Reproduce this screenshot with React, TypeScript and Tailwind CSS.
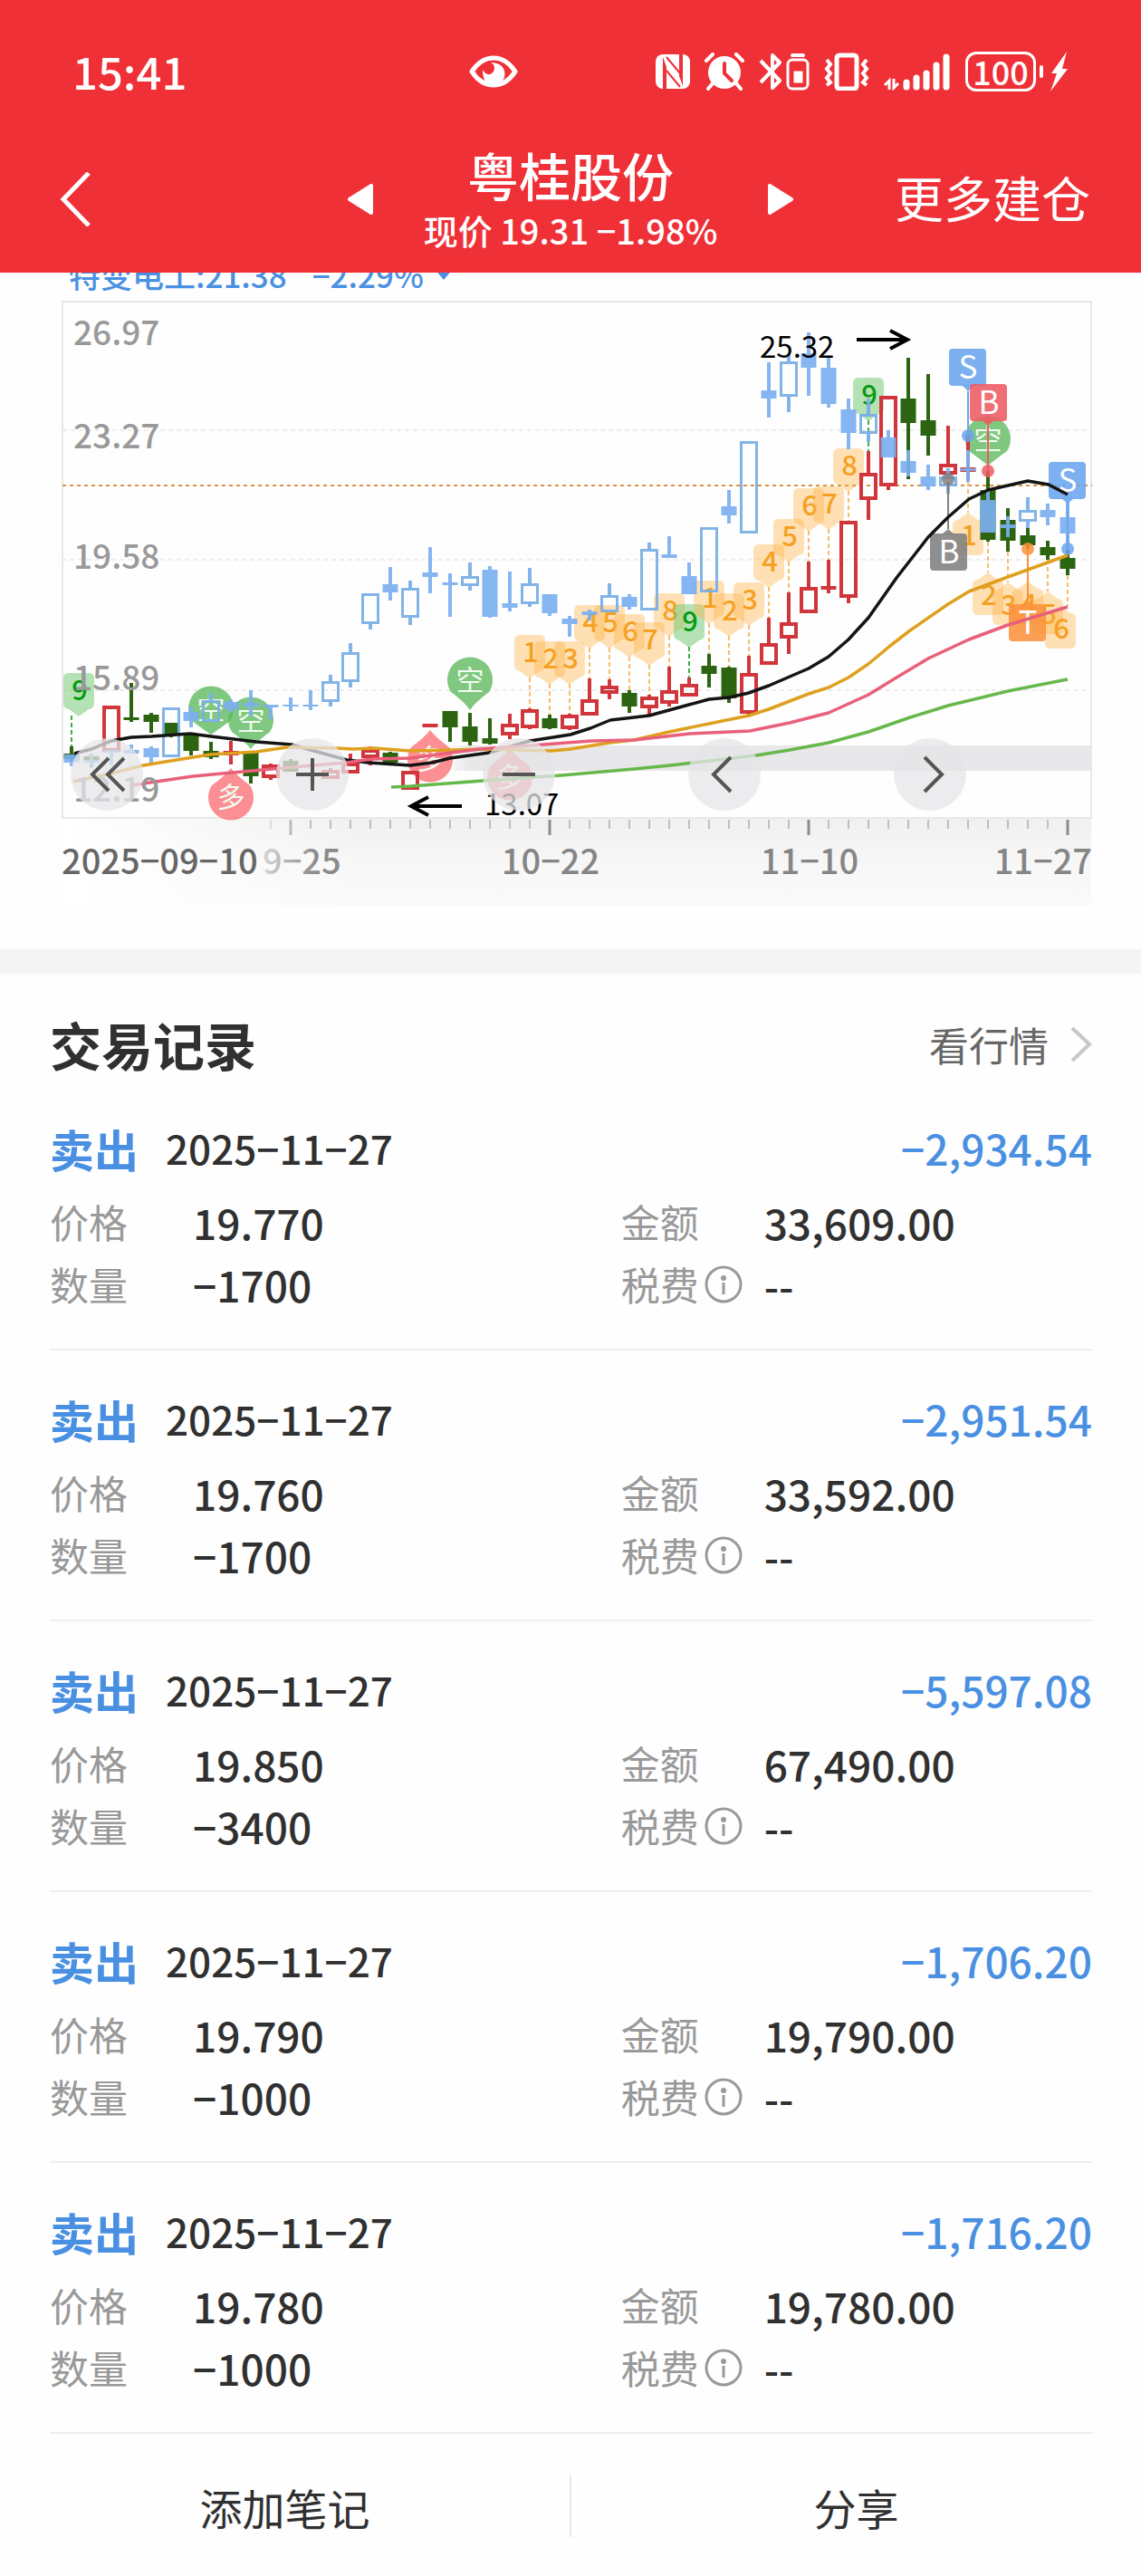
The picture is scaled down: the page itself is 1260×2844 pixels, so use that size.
import type { ReactNode } from "react";

type Kind = "up" | "down" | "hollow" | "solid";
// index, high, body top, body bottom, low, kind
type Candle = [number, number, number, number, number, Kind];

const RED = "#d0363b";
const GREEN = "#2c6412";
const BLUE = "#7bb0f0";
const COLORS: Record<Kind, string> = { up: RED, down: GREEN, hollow: "#78aee6", solid: BLUE };

const xAt = (i: number) => 79 + i * 22;

const mainCandles: Candle[] = [
  [0, 824, 832, 838, 840, "down"],
  [1, 832, 835, 839, 847, "down"],
  [2, 779, 779, 830, 830, "up"],
  [3, 754, 792, 795, 797, "down"],
  [4, 787, 789, 797, 809, "down"],
  [5, 798, 798, 812, 814, "down"],
  [6, 812, 812, 829, 834, "down"],
  [7, 819, 829, 836, 838, "down"],
  [8, 818, 829, 834, 844, "up"],
  [9, 831, 831, 857, 865, "down"],
  [10, 843, 844, 859, 861, "up"],
  [11, 838, 840, 852, 852, "down"],
  [13, 848, 850, 860, 860, "up"],
  [14, 832, 842, 854, 854, "up"],
  [15, 824, 827, 837, 845, "up"],
  [16, 830, 831, 842, 842, "down"],
  [17, 851, 851, 872, 872, "up"],
  [18, 799, 799, 803, 803, "up"],
  [19, 785, 785, 803, 819, "down"],
  [20, 787, 802, 819, 823, "down"],
  [21, 793, 815, 821, 822, "down"],
  [22, 788, 799, 812, 816, "up"],
  [23, 782, 783, 804, 805, "up"],
  [24, 789, 793, 804, 805, "down"],
  [25, 788, 789, 805, 806, "up"],
  [26, 749, 772, 790, 790, "up"],
  [27, 750, 757, 766, 772, "up"],
  [28, 762, 765, 780, 787, "down"],
  [29, 767, 769, 782, 791, "up"],
  [30, 736, 762, 777, 780, "up"],
  [31, 748, 755, 769, 769, "up"],
  [32, 722, 735, 744, 759, "down"],
  [33, 736, 737, 771, 776, "down"],
  [34, 724, 743, 788, 789, "up"],
  [35, 682, 710, 734, 734, "up"],
  [36, 654, 687, 705, 722, "up"],
  [37, 620, 648, 677, 677, "up"],
  [38, 618, 647, 651, 655, "up"],
  [39, 575, 575, 660, 666, "up"],
  [40, 498, 522, 552, 574, "up"],
  [41, 437, 437, 537, 541, "up"],
  [42, 395, 440, 467, 529, "down"],
  [43, 413, 464, 481, 503, "down"],
  [44, 470, 512, 524, 524, "up"],
  [45, 480, 516, 521, 532, "up"],
  [46, 520, 541, 596, 598, "down"],
  [47, 561, 574, 597, 609, "down"],
  [48, 583, 591, 602, 606, "down"],
  [49, 597, 604, 613, 618, "down"],
  [50, 607, 616, 628, 635, "down"],
];

const compareCandles: Candle[] = [
  [0, 833, 833, 842, 846, "solid"],
  [1, 832, 839, 842, 846, "solid"],
  [2, 828, 828, 831, 845, "solid"],
  [3, 822, 828, 832, 832, "solid"],
  [4, 824, 826, 836, 844, "solid"],
  [5, 781, 781, 836, 836, "hollow"],
  [6, 780, 786, 796, 803, "solid"],
  [7, 765, 773, 797, 797, "hollow"],
  [8, 772, 775, 783, 787, "solid"],
  [9, 762, 776, 780, 790, "solid"],
  [10, 778, 778, 781, 794, "solid"],
  [11, 770, 778, 780, 785, "solid"],
  [12, 762, 778, 780, 784, "solid"],
  [13, 745, 752, 775, 780, "hollow"],
  [14, 710, 720, 753, 759, "hollow"],
  [15, 655, 655, 689, 695, "hollow"],
  [16, 626, 645, 654, 663, "solid"],
  [17, 641, 649, 682, 690, "hollow"],
  [18, 604, 632, 637, 655, "solid"],
  [19, 633, 643, 646, 681, "solid"],
  [20, 621, 636, 647, 652, "hollow"],
  [21, 625, 629, 681, 682, "solid"],
  [22, 631, 666, 671, 675, "solid"],
  [23, 627, 644, 667, 670, "hollow"],
  [24, 656, 656, 677, 680, "solid"],
  [25, 680, 683, 689, 703, "solid"],
  [26, 673, 675, 679, 685, "solid"],
  [27, 644, 657, 676, 676, "hollow"],
  [28, 656, 659, 670, 673, "solid"],
  [29, 599, 606, 674, 674, "hollow"],
  [30, 592, 612, 616, 616, "solid"],
  [31, 621, 636, 656, 656, "solid"],
  [32, 582, 582, 654, 654, "hollow"],
  [33, 541, 559, 569, 578, "solid"],
  [34, 487, 487, 589, 589, "hollow"],
  [35, 400, 431, 440, 461, "solid"],
  [36, 392, 399, 438, 455, "hollow"],
  [37, 367, 390, 406, 437, "solid"],
  [38, 394, 406, 446, 450, "solid"],
  [39, 440, 452, 478, 496, "solid"],
  [40, 440, 457, 479, 488, "hollow"],
  [41, 475, 483, 505, 505, "solid"],
  [42, 497, 509, 522, 526, "solid"],
  [43, 513, 526, 537, 541, "solid"],
  [44, 517, 526, 537, 545, "hollow"],
  [45, 497, 517, 520, 532, "solid"],
  [46, 541, 552, 588, 588, "solid"],
  [47, 570, 579, 583, 593, "solid"],
  [48, 549, 563, 576, 583, "hollow"],
  [49, 556, 563, 571, 580, "solid"],
  [50, 553, 571, 589, 607, "solid"],
];

const averages = [
  { color: "#141414", points: "82,832 101,827 123,818 145,814 167,813 210,810 233,813 283,819 322,822 343,828 383,839 407,842 453,845 477,842 497,837 540,831 585,818 630,811 652,804 674,795 700,792 717,790 739,784 783,772 805,770 827,765 849,757 893,738 915,725 937,706 959,682 990,638 1025,593 1047,571 1070,551 1091,541 1135,531 1158,535 1179,546" },
  { color: "#dfa01f", points: "81,863 127,853 158,845 232,833 283,830 317,825 370,826 390,827 413,826 453,829 540,827 608,829 630,827 673,820 700,817 739,808 783,799 827,790 849,783 893,766 915,759 937,748 959,733 983,713 1005,696 1047,667 1070,653 1113,637 1179,613" },
  { color: "#e8607a", points: "145,867 213,857 322,847 383,842 410,838 453,837 530,827 587,823 653,818 700,817 762,810 828,807 872,798 915,787 959,767 990,748 1025,727 1070,706 1113,690 1179,670" },
  { color: "#67b84b", points: "432,869 453,868 533,862 620,856 700,849 740,845 835,834 872,828 915,820 959,808 1005,792 1047,779 1113,763 1179,750" },
];

// index, label, box top, end of the dashed leader
const flagsAbove: [number, string, number, number][] = [
  [0, "9", 743, 824],
  [23, "1", 701, 782],
  [24, "2", 708, 789],
  [25, "3", 708, 788],
  [26, "4", 668, 749],
  [27, "5", 668, 750],
  [28, "6", 678, 762],
  [29, "7", 687, 767],
  [30, "8", 655, 736],
  [31, "9", 667, 748],
  [32, "1", 641, 722],
  [33, "2", 655, 736],
  [34, "3", 643, 724],
  [35, "4", 601, 682],
  [36, "5", 573, 654],
  [37, "6", 539, 620],
  [38, "7", 537, 618],
  [39, "8", 495, 575],
  [40, "9", 417, 498],
];

// index, label, tip, start of the dashed leader
const flagsBelow: [number, string, number, number][] = [
  [45, "1", 566, 532],
  [46, "2", 632, 598],
  [47, "3", 643, 609],
  [48, "4", 642, 606],
  [49, "5", 653, 618],
  [50, "6", 669, 635],
];

// x, circle centre, tip, label
const pins: [number, number, number, string][] = [
  [233, 783, 811, "空"],
  [277, 795, 827, "空"],
  [519, 751, 784, "空"],
  [1091, 485, 514, "空"],
  [255, 880, 848, "多"],
  [475, 838, 806, "多"],
  [563, 858, 826, "多"],
];

const trades = [
  { date: "2025-11-27", profit: "-2,934.54", price: "19.770", qty: "-1700", amount: "33,609.00" },
  { date: "2025-11-27", profit: "-2,951.54", price: "19.760", qty: "-1700", amount: "33,592.00" },
  { date: "2025-11-27", profit: "-5,597.08", price: "19.850", qty: "-3400", amount: "67,490.00" },
  { date: "2025-11-27", profit: "-1,706.20", price: "19.790", qty: "-1000", amount: "19,790.00" },
  { date: "2025-11-27", profit: "-1,716.20", price: "19.780", qty: "-1000", amount: "19,780.00" },
];

const fig = (text: string) => text.replace(/-/g, "−");

function CandleShape({ candle }: { candle: Candle }) {
  const [i, high, top, bottom, low, kind] = candle;
  const x = xAt(i);
  const color = COLORS[kind];
  const open = (kind === "up" || kind === "hollow") && bottom - top > 8;
  const w = kind === "up" ? 4 : 3;
  return (
    <g>
      {high < top && <line x1={x} x2={x} y1={high} y2={top} stroke={color} strokeWidth="4" />}
      {low > bottom && <line x1={x} x2={x} y1={bottom} y2={low} stroke={color} strokeWidth="4" />}
      {open ? (
        <rect x={x - 10 + w / 2} y={top + w / 2} width={20 - w} height={bottom - top - w} fill="none" stroke={color} strokeWidth={w} />
      ) : (
        <rect x={x - 8.5} y={top} width="17" height={bottom - top} fill={color} />
      )}
    </g>
  );
}

function Flag({ x, y, label, below }: { x: number; y: number; label: string; below?: boolean }) {
  const green = label === "9";
  const d = below
    ? `M${x} ${y} l11 8 q6 0 6 6 v27 q0 6 -6 6 h-22 q-6 0 -6 -6 v-27 q0 -6 6 -6z`
    : `M${x - 11} ${y} h22 q6 0 6 6 v28 q0 5 -6 6 l-11 8 l-11 -8 q-6 -1 -6 -6 v-28 q0 -6 6 -6z`;
  return (
    <g>
      <path d={d} fill={green ? "#69c56b" : "#ffb347"} fillOpacity={green ? 0.5 : 0.4} />
      <text x={x + 1} y={below ? y + 36 : y + 30} textAnchor="middle" fontSize="31" fontWeight="500" fill={green ? "#079a10" : "#f5a021"}>
        {label}
      </text>
    </g>
  );
}

function Pin({ x, cy, tip, label }: { x: number; cy: number; tip: number; label: string }) {
  const color = label === "空" ? "#5cb85c" : "#fb6f76";
  const dir = tip > cy ? 1 : -1;
  return (
    <g>
      <path
        d={`M${x - 21} ${cy + dir * 13} A25 25 0 1 ${dir > 0 ? 1 : 0} ${x + 21} ${cy + dir * 13} Q${x + 6} ${cy + dir * 24} ${x} ${tip} Q${x - 6} ${cy + dir * 24} ${x - 21} ${cy + dir * 13}z`}
        fill={color}
        fillOpacity="0.78"
      />
      <text x={x} y={cy + 11} textAnchor="middle" fontSize="31" fill="#f2fbf0">
        {label}
      </text>
    </g>
  );
}

function Mark({ x, y, left, top, tip, dot, label, color }: { x: number; y: number; left: number; top: number; tip: number; dot: number; label: string; color: string }) {
  const base = tip > top ? top + 40 : top + 1;
  return (
    <g>
      <line x1={x} x2={x} y1={tip} y2={y} stroke={color} strokeWidth="2" />
      <circle cx={x} cy={dot} r="7" fill={color} fillOpacity="0.85" />
      <rect x={left} y={top} width="41" height="41" rx="4" fill={color} fillOpacity="0.88" />
      <path d={`M${x - 7} ${base} L${x} ${tip} L${x + 7} ${base}z`} fill={color} fillOpacity="0.88" />
      <text x={left + 21} y={top + 33} textAnchor="middle" fontSize="35" fill="#fff">
        {label}
      </text>
    </g>
  );
}

function KLineChart() {
  return (
    <svg viewBox="0 325 1260 723" className="block h-auto w-full" role="img" aria-label="K线图">
      <defs>
        <linearGradient id="axis" x1="0" x2="0" y1="0" y2="1">
          <stop offset="0" stopColor="#f0f0ef" />
          <stop offset="0.5" stopColor="#f7f7f7" />
          <stop offset="1" stopColor="#fafafa" />
        </linearGradient>
        <linearGradient id="axisFade" x1="0" x2="1" y1="0" y2="0">
          <stop offset="0" stopColor="#fff" />
          <stop offset="0.3" stopColor="#fff" stopOpacity="0" />
        </linearGradient>
        <linearGradient id="band" x1="0" x2="1" y1="0" y2="0">
          <stop offset="0" stopColor="#e8e8ea" stopOpacity="0" />
          <stop offset="0.04" stopColor="#e8e8ea" />
        </linearGradient>
        <linearGradient id="dateFade" gradientUnits="userSpaceOnUse" x1="285" x2="350" y1="0" y2="0">
          <stop offset="0" stopColor="#dcdcdc" />
          <stop offset="1" stopColor="#8a8a8a" />
        </linearGradient>
      </defs>

      <rect x="69" y="904" width="1136" height="96" fill="url(#axis)" />
      <rect x="69" y="904" width="1136" height="96" fill="url(#axisFade)" />
      <rect x="490" y="823" width="715" height="28" fill="url(#band)" />
      <rect x="69" y="333" width="1136" height="570" fill="none" stroke="#e8e8e8" strokeWidth="2" />
      {[475, 618, 762].map((y) => (
        <line key={y} x1="69" x2="1201" y1={y} y2={y} stroke="#dcdcdc" strokeDasharray="5 4" />
      ))}
      <line x1="69" x2="1206" y1="536" y2="536" stroke="#d9923f" strokeWidth="2" strokeDasharray="4 4" />

      {flagsAbove.map(([i, label, top, end]) => (
        <g key={i}>
          <line x1={xAt(i)} x2={xAt(i)} y1={top + 47} y2={end} stroke={label === "9" ? "#3fae46" : "#f6bd6a"} strokeWidth="2" strokeDasharray="5 3" />
          <Flag x={i === 0 ? 87 : xAt(i)} y={top} label={label} />
        </g>
      ))}
      {flagsBelow.map(([i, label, tip, start]) => (
        <g key={i}>
          <line x1={xAt(i)} x2={xAt(i)} y1={start} y2={tip} stroke="#f6bd6a" strokeWidth="2" strokeDasharray="5 3" />
          <Flag x={i === 50 ? 1171 : xAt(i)} y={tip} label={label} below />
        </g>
      ))}
      {pins.map(([x, cy, tip, label]) => (
        <Pin key={x} x={x} cy={cy} tip={tip} label={label} />
      ))}

      <g fill="none" stroke="#000" strokeWidth="4">
        <path d="M946 375 H1002 M983 365 L1002 375 L983 385" />
        <path d="M510 890 H454 M473 880 L454 890 L473 900" />
      </g>

      {mainCandles.map((c) => (
        <CandleShape key={c[0]} candle={c} />
      ))}
      <g opacity="0.92">
        {compareCandles.map((c) => (
          <CandleShape key={c[0]} candle={c} />
        ))}
      </g>
      <g fontSize="33" fill="#000">
        <text x="839" y="395">25.32</text>
        <text x="535" y="900">13.07</text>
      </g>

      <Mark x={1069} y={481} left={1048} top={385} tip={432} dot={481} label="S" color="#6aa5ee" />
      <Mark x={1091} y={520} left={1071} top={424} tip={470} dot={520} label="B" color="#ee5a63" />
      <Mark x={1179} y={600} left={1158} top={510} tip={556} dot={606} label="S" color="#6aa5ee" />
      <Mark x={1047} y={532} left={1027} top={589} tip={584} dot={529} label="B" color="#808080" />
      <Mark x={1135} y={610} left={1114} top={667} tip={662} dot={606} label="T" color="#fb923c" />

      {averages.map((line) => (
        <polyline key={line.color} points={line.points} fill="none" stroke={line.color} strokeWidth="3.5" strokeLinejoin="round" />
      ))}

      <g fontSize="37" fontWeight="500" fill="#999">
        <text x="81" y="381">26.97</text>
        <text x="81" y="495">23.27</text>
        <text x="81" y="628">19.58</text>
        <text x="81" y="762">15.89</text>
        <text x="81" y="885">12.19</text>
      </g>

      {Array.from({ length: 41 }, (_, n) => n + 10).map((i) => {
        const major = i === 11 || i === 24 || i === 37 || i === 50;
        return (
          <line
            key={i}
            x1={xAt(i)}
            x2={xAt(i)}
            y1="905"
            y2={major ? 922 : 915}
            stroke={i < 12 ? "#bdbdbd" : "#8c8c8c"}
            strokeWidth={major ? 3 : 1}
          />
        );
      })}
      <g fontSize="38" fontWeight="500" fill="#858585">
        <text x="68" y="965" fill="#666">{fig("2025-09-10")}</text>
        <text x="290" y="965" fill="url(#dateFade)">{fig("9-25")}</text>
        <text x="608" y="965" textAnchor="middle">{fig("10-22")}</text>
        <text x="894" y="965" textAnchor="middle">{fig("11-10")}</text>
        <text x="1206" y="965" textAnchor="end">{fig("11-27")}</text>
      </g>
    </svg>
  );
}

function RoundButton({ label, children }: { label: string; children: ReactNode }) {
  return (
    <button type="button" aria-label={label} className="size-20 rounded-full bg-[#e6e5e8]/75">
      <svg viewBox="0 0 80 80" className="size-20" fill="none" stroke="#555" strokeWidth="4">
        {children}
      </svg>
    </button>
  );
}

function StatusIcons() {
  return (
    <div className="flex items-center gap-4 text-white">
      <svg viewBox="0 0 38 38" className="h-[38px] w-[38px]" aria-hidden="true">
        <rect width="38" height="38" rx="8" fill="currentColor" />
        <path d="M8 38 V3 L12 14 V38z M30 0 V35 L26 24 V0z" fill="#f03037" />
        <path d="M12 3 L27 21 M12 18 L27 36" stroke="#f03037" strokeWidth="2" fill="none" />
      </svg>
      <svg viewBox="0 0 44 42" className="h-[42px] w-[44px]" aria-hidden="true">
        <circle cx="22" cy="22" r="18" fill="currentColor" />
        <path d="M2 9 L9 2 M42 9 L35 2 M9 34 L4 40 M35 34 L40 40" stroke="currentColor" strokeWidth="4" strokeLinecap="round" />
        <path d="M22 12 V23 L30 31" stroke="#f03037" strokeWidth="4" strokeLinecap="round" fill="none" />
      </svg>
      <svg viewBox="0 0 56 42" className="h-[42px] w-[56px]" fill="none" stroke="currentColor" aria-hidden="true">
        <path d="M2 9 L23 31 L15 39 V3 L23 11 L2 33" strokeWidth="4" strokeLinejoin="round" />
        <rect x="32" y="8" width="22" height="32" rx="5" strokeWidth="3" />
        <path d="M37 3 H49" strokeWidth="4" strokeLinecap="round" />
        <rect x="39" y="21" width="9" height="12" fill="currentColor" />
      </svg>
      <svg viewBox="0 0 50 42" className="h-[42px] w-[50px]" fill="none" stroke="currentColor" aria-hidden="true">
        <rect x="14" y="3" width="22" height="37" rx="3" strokeWidth="5" />
        <path d="M3 8 L7 13 L3 18 L7 23 L3 28 L7 33 L3 36 M47 8 L43 13 L47 18 L43 23 L47 28 L43 33 L47 36" strokeWidth="4" />
      </svg>
      <svg viewBox="0 0 74 42" className="h-[42px] w-[74px]" fill="none" stroke="currentColor" aria-hidden="true">
        <path d="M6 41 V31 L1 36 M11 29 V39 L16 34" strokeWidth="3" />
        <path d="M25 38 V33 M36 38 V28 M47 38 V23 M58 38 V14 M69 38 V5" strokeWidth="7" strokeLinecap="round" />
      </svg>
      <div className="flex items-center gap-1">
        <span className="flex h-11 w-[78px] items-center justify-center rounded-[12px] border-3 border-white pb-0.5 text-[36px] leading-none font-medium">100</span>
        <span className="h-3.5 w-1 rounded-full bg-white" />
        <svg viewBox="0 0 20 44" className="ml-1 h-11 w-5" fill="currentColor" aria-hidden="true">
          <path d="M18 0 L1 24 H7 L0 44 L19 19 H13z" />
        </svg>
      </div>
    </div>
  );
}

function Header() {
  return (
    <header className="bg-[#f03037] text-white">
      <div className="relative flex h-[158px] items-center justify-between px-20">
        <time className="pb-1 text-[49px] leading-none font-medium">15:41</time>
        <svg viewBox="0 0 54 36" className="absolute left-[518px] h-9 w-[54px]" aria-hidden="true">
          <path d="M3 18 Q13 3 27 3 Q41 3 51 18 Q41 33 27 33 Q13 33 3 18z" fill="none" stroke="#fff" strokeWidth="5" strokeLinejoin="round" />
          <path d="M24 8 C37 8 41 17 39 24 C37 30 33 34 27 34 C20 34 15 28 15 16 C19 23 24 22 27 18 C29 14 28 10 24 8z" fill="#fff" />
        </svg>
        <StatusIcons />
      </div>
      <div className="grid h-[143px] grid-cols-[1fr_auto_1fr] items-center px-14 pb-5">
        <button type="button" aria-label="返回" className="justify-self-start px-2.5">
          <svg viewBox="0 0 34 60" className="h-[60px] w-[34px]" fill="none" stroke="#fff" strokeWidth="5">
            <path d="M32 1 L4 30 L32 59" />
          </svg>
        </button>
        <div className="flex items-center gap-14">
          <button type="button" aria-label="上一只">
            <svg viewBox="0 0 28 34" className="h-[34px] w-7" fill="#fff" stroke="#fff" strokeWidth="4" strokeLinejoin="round">
              <path d="M26 2 V32 L2 17z" />
            </svg>
          </button>
          <div className="text-center font-medium">
            <h1 className="text-[57px] leading-[68px]">粤桂股份</h1>
            <p className="text-[38px] leading-[56px]">{fig("现价 19.31 -1.98%")}</p>
          </div>
          <button type="button" aria-label="下一只">
            <svg viewBox="0 0 28 34" className="h-[34px] w-7" fill="#fff" stroke="#fff" strokeWidth="4" strokeLinejoin="round">
              <path d="M2 2 V32 L26 17z" />
            </svg>
          </button>
        </div>
        <button type="button" className="justify-self-end pb-1 text-[54px] leading-none">更多建仓</button>
      </div>
    </header>
  );
}

function ChartSection() {
  return (
    <section className="overflow-hidden">
      <p className="-mt-5 flex items-center gap-7 pl-[76px] text-[35px] leading-[44px] font-medium text-[#4a90e2]">
        <span>特变电工:21.38</span>
        <span>{fig("-2.29%")}</span>
        <svg viewBox="0 0 20 12" className="-ml-4 h-3 w-5" fill="currentColor" aria-hidden="true">
          <path d="M0 0 H20 L10 12z" />
        </svg>
      </p>
      <div className="relative">
        <KLineChart />
        <div className="absolute top-[67.8%] right-[15.3%] left-[6.2%] flex justify-between">
          <RoundButton label="最早">
            <path d="M42 22 L24 40 L42 58 M59 22 L41 40 L59 58" />
          </RoundButton>
          <RoundButton label="放大">
            <path d="M22 40 H58 M40 22 V58" />
          </RoundButton>
          <RoundButton label="缩小">
            <path d="M22 40 H58" />
          </RoundButton>
          <RoundButton label="左移">
            <path d="M47 21 L28 40 L47 59" />
          </RoundButton>
          <RoundButton label="右移">
            <path d="M34 21 L53 40 L34 59" />
          </RoundButton>
        </div>
      </div>
    </section>
  );
}

function InfoIcon() {
  return (
    <svg viewBox="0 0 42 42" className="h-[42px] w-[42px]" fill="none" stroke="#999" strokeWidth="3" aria-hidden="true">
      <circle cx="21" cy="21" r="19" />
      <path d="M21 19 V32" />
      <circle cx="21" cy="14" r="3" fill="#999" stroke="none" />
    </svg>
  );
}

function Field({ label, value, info }: { label: string; value: string; info?: boolean }) {
  return (
    <div className="flex h-[69px] items-center">
      <dt className="flex w-[158px] items-center gap-1.5 text-[43px] text-[#999]">
        {label}
        {info && <InfoIcon />}
      </dt>
      <dd className="text-[46px] font-medium text-[#303030]">{value}</dd>
    </div>
  );
}

function TradeRow({ trade }: { trade: (typeof trades)[number] }) {
  return (
    <li className="border-b-2 border-[#efefef] pt-[50px] pb-[37px] leading-none">
      <div className="mb-[22px] flex h-[50px] items-center">
        <span className="mr-[30px] text-[49px] font-bold text-[#4a90e2]">卖出</span>
        <time dateTime={trade.date} className="text-[44px] font-medium text-[#303030]">{fig(trade.date)}</time>
        <span className="ml-auto text-[46px] font-medium text-[#4a90e2]">{fig(trade.profit)}</span>
      </div>
      <dl className="grid grid-cols-[629fr_519fr]">
        <Field label="价格" value={trade.price} />
        <Field label="金额" value={trade.amount} />
        <Field label="数量" value={fig(trade.qty)} />
        <Field label="税费" value="--" info />
      </dl>
    </li>
  );
}

export default function App() {
  return (
    <div className="min-h-screen bg-[#fefefe] font-['Noto_Sans_CJK_SC',sans-serif]">
      <Header />
      <ChartSection />
      <section className="border-t-[27px] border-[#f4f4f4] pr-[54px] pl-[55px]">
        <div className="flex h-[117px] items-center justify-between pt-[38px] leading-none">
          <h2 className="text-[57px] font-bold text-[#303030]">交易记录</h2>
          <a href="#quote" className="flex items-center gap-6 text-[44px] text-[#666]">
            看行情
            <svg viewBox="0 0 24 40" className="h-10 w-6" fill="none" stroke="#c8c8c8" strokeWidth="4" aria-hidden="true">
              <path d="M2 2 L21 20 L2 38" />
            </svg>
          </a>
        </div>
        <ul>
          {trades.map((t) => (
            <TradeRow key={t.profit} trade={t} />
          ))}
        </ul>
      </section>
      <footer className="flex h-[156px] items-center pt-1 text-[47px] leading-none text-[#303030]">
        <button type="button" className="flex-1">添加笔记</button>
        <span className="h-[68px] w-0.5 bg-[#e8e8e8]" />
        <button type="button" className="flex-1">分享</button>
      </footer>
    </div>
  );
}
